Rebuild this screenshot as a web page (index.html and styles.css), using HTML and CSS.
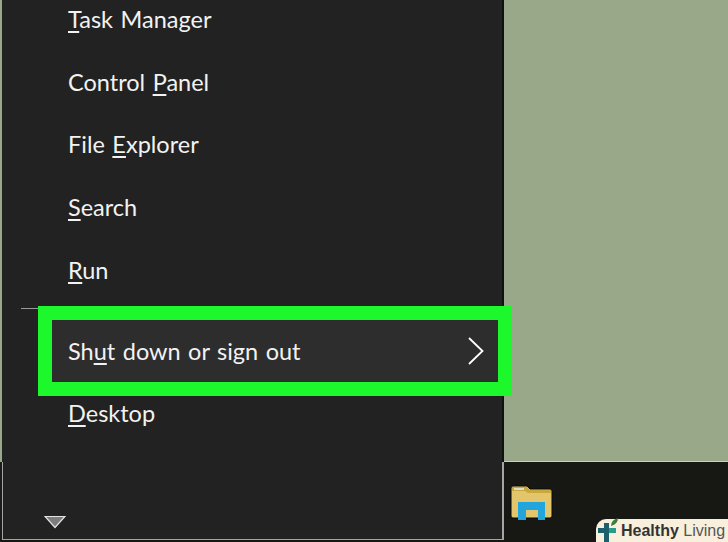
FILE: index.html
```html
<!DOCTYPE html>
<html lang="en">
<head>
  <meta charset="UTF-8">
  <title>Shut down or sign out</title>
  <link rel="stylesheet" href="styles.css">
</head>
<body>
  <div class="desktop">
    <div class="edge"></div>

    <!-- Power user menu -->
    <div class="menu">
      <div class="menu-list">
        <div class="menu-item"><span><u>T</u>ask Manager</span></div>
        <div class="menu-item"><span>Control <u>P</u>anel</span></div>
        <div class="menu-item"><span>File <u>E</u>xplorer</span></div>
        <div class="menu-item"><span><u>S</u>earch</span></div>
        <div class="menu-item"><span><u>R</u>un</span></div>
        <div class="menu-divider"></div>
        <div class="menu-item active">
          <div class="highlight"></div>
          <span>Sh<u>u</u>t down or sign out</span>
          <svg class="chevron" width="18" height="30" viewBox="0 0 18 30">
            <path d="M2 2 L15.5 15 L2 28" fill="none" stroke="#fff" stroke-width="1.8"/>
          </svg>
        </div>
        <div class="menu-item"><span><u>D</u>esktop</span></div>
      </div>
      <div class="menu-foot">
        <svg width="22" height="14" viewBox="0 0 22 14">
          <path d="M1 1.5 H21 L11 12.5 Z" fill="#7d7d7d" stroke="#e4e4e4" stroke-width="1.2"/>
        </svg>
      </div>
    </div>

    <div class="side">
      <div class="wallpaper"></div>
      <div class="taskbar">
        <svg class="folder" width="44" height="36" viewBox="0 0 44 36">
          <path d="M1 3 Q1 1 3 1 H17 L20 4 H40 Q42 4 42 6 V31 Q42 33 40 33 H3 Q1 33 1 31 Z" fill="#e3c56c" stroke="#0a0a08"/>
          <path d="M2 2 H17 L20 5 H41 V8 H18 L15 6 H2 Z" fill="#c9a83c"/>
          <rect x="4" y="3" width="10" height="2" fill="#d9e0c0"/>
          <path d="M8 35 V17 H35 V35 H28 V25 H16 V35 Z" fill="#22a5dc"/>
        </svg>
        <div class="badge">
          <svg class="badge-icon" width="28" height="28" viewBox="0 0 28 28">
            <path d="M7 9 H12 V14 H19 V19 H12 V28 H7 V19 H1 V14 H7 Z" fill="#1d5f6a"/>
            <path d="M12 14 H19 V19 H12 Z" fill="#2a9a8a"/>
            <path d="M14 12 Q14 6 21 4 Q21 10 14 12 Z" fill="#3c7d3a"/>
          </svg>
          <span class="badge-text"><b>Healthy</b> <span class="badge-light">Living</span></span>
        </div>
      </div>
    </div>
  </div>
</body>
</html>
```

FILE: styles.css
```css
/* General styles */
html, body {
  margin: 0;
  padding: 0;
  height: 100%;
  overflow: hidden;
}

body {
  font-family: 'Lato', 'Open Sans', sans-serif;
  color: #f2f2f2;
}

.desktop {
  display: flex;
  width: 728px;
  height: 542px;
  overflow: hidden;
  background-color: #171714;
}

/* Sliver of desktop left of the menu */
.edge {
  flex: none;
  width: 2px;
  background: linear-gradient(#98a888 462px, #1c1c1a 462px);
}

/* Menu: thin side lines only show below the taskbar line */
.menu {
  flex: none;
  width: 502px;
  height: 540px;
  box-sizing: border-box;
  background:
    linear-gradient(#222222 462px, #a5a5a5 462px) left / 1px 100% no-repeat,
    linear-gradient(#111111 462px, #a5a5a5 462px) right / 2px 100% no-repeat,
    #222222;
  border-bottom: 1px solid #a5a5a5;
  display: flex;
  flex-direction: column;
  position: relative;
  z-index: 1;
}

.menu-list {
  flex: 1;
  margin-top: -12.4px;
}

.menu-item {
  height: 62.7px;
  padding: 0 19px 0 66px;
  display: flex;
  align-items: center;
  justify-content: space-between;
  font-size: 23.5px;
  word-spacing: 1.5px;
  position: relative;
}

.menu-item span, .chevron {
  position: relative;
}

.menu-item u {
  text-underline-offset: 3px;
  text-decoration-thickness: 1.5px;
}

.menu-divider {
  height: 1px;
  margin: 7.4px 0 10.5px 19px;
  width: 100px;
  background-color: #9a9a9a;
}

/* Green callout drawn on top of the row */
.highlight {
  position: absolute;
  top: -14px;
  bottom: -14px;
  left: 36px;
  right: -8px;
  border: 14px solid #1cf82c;
  background-color: #2d2d2d;
}

.active {
  height: 62px;
}

.menu-foot {
  height: 26px;
  padding-left: 42px;
}

/* Right side */
.side {
  flex: 1;
  display: flex;
  flex-direction: column;
}

.wallpaper {
  height: 462px;
  background-color: #98a888;
  border-bottom: 1px solid #c8d4b8;
  box-sizing: border-box;
}

.taskbar {
  flex: 1;
  position: relative;
  padding: 23px 0 0 6px;
}

.folder {
  display: block;
}

/* Watermark */
.badge {
  position: absolute;
  right: 0;
  bottom: 0;
  width: 132px;
  height: 23px;
  background-color: #f8efdc;
  border-radius: 10px 0 0 0;
  display: flex;
  align-items: center;
}

.badge-icon {
  position: absolute;
  left: 1px;
  top: -5px;
}

.badge-text {
  margin-left: 25px;
  font-family: 'Liberation Sans', sans-serif;
  font-size: 16px;
  color: #333333;
  white-space: nowrap;
}

.badge-light {
  color: #555555;
}
```
